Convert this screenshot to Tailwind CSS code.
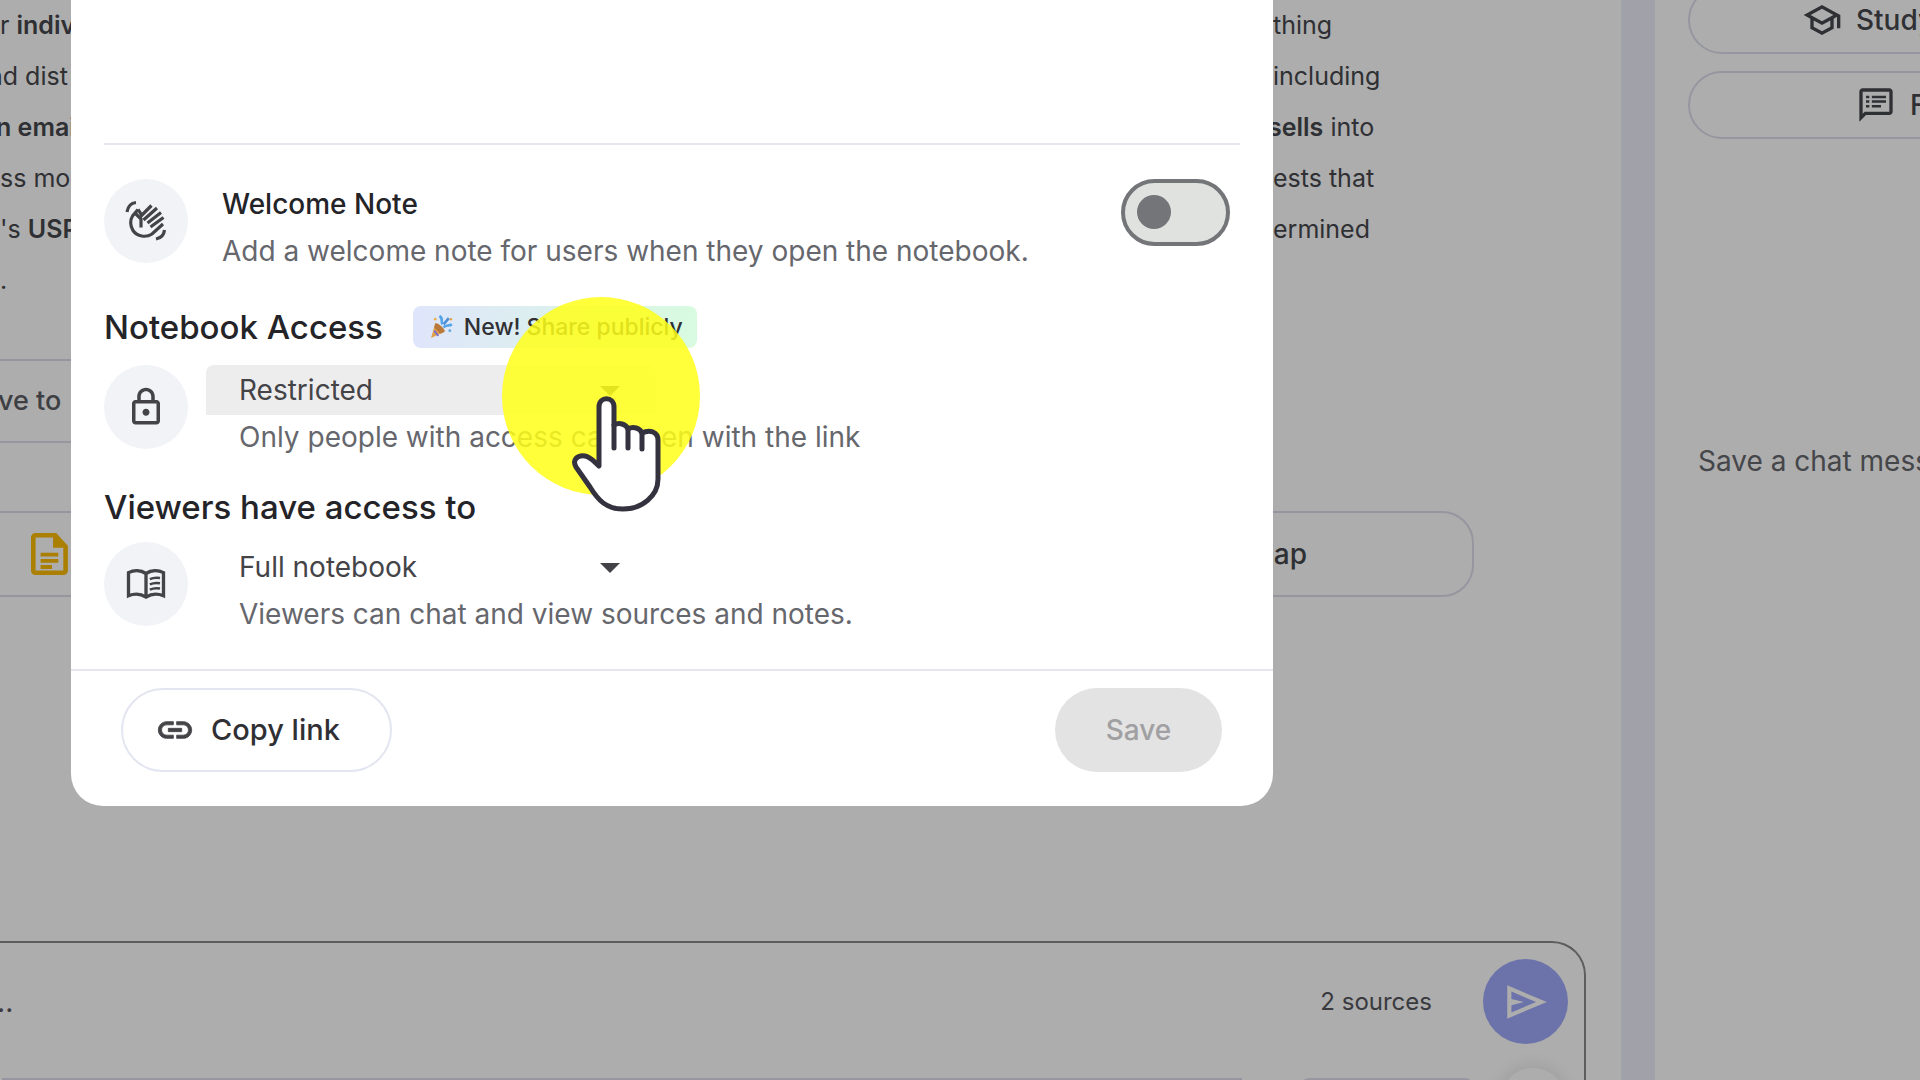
<!DOCTYPE html>
<html lang="en">
<head>
  <meta charset="UTF-8">
  <meta name="viewport" content="width=device-width, initial-scale=1.0">
  <title>Share notebook</title>
  <script src="https://cdn.jsdelivr.net/npm/@tailwindcss/browser@4"></script>
</head>
<body class="bg-[#edeffa] text-[#46474d] h-screen overflow-hidden relative [font-family:Inter,sans-serif]">

  <!-- Page behind the dialog -->
  <div class="flex h-full gap-[34px]">
    <main class="flex-1 min-w-0 bg-white flex flex-col overflow-hidden">
      <div class="text-[25px] leading-[51px] whitespace-nowrap">
        <p class="flex"><span class="w-[1273px] shrink-0">r <b class="font-semibold">indiv</b></span><span>thing</span></p>
        <p class="flex"><span class="w-[1273px] shrink-0"><span class="-ml-3">nd dist</span></span><span>including</span></p>
        <p class="flex"><span class="w-[1268px] shrink-0 font-semibold"><span class="-ml-1">n emai</span></span><span><b class="font-semibold">sells</b> into</span></p>
        <p class="flex"><span class="w-[1273px] shrink-0">ss mo</span><span>ests that</span></p>
        <p class="flex"><span class="w-[1273px] shrink-0">'s <b class="font-semibold">USP</b></span><span>ermined</span></p>
        <p>.</p>
      </div>

      <button class="mt-[53px] -ml-8 w-[300px] h-[84px] shrink-0 border-2 border-[#dcdeea] rounded-[32px] pl-7 text-left text-[27px] font-medium text-[#5c5d63]">ve to</button>

      <div class="mt-[68px] -ml-8 mr-[147px] flex gap-6">
        <button class="w-[600px] h-[86px] shrink-0 border-2 border-[#dcdeea] rounded-[32px] pl-14" aria-label="Add note">
          <svg class="w-[50px] h-[50px]" viewBox="0 0 24 24">
            <path d="M4.500 3h9.500l5 5.500v11.500a1 1 0 0 1-1 1h-13.500a1 1 0 0 1-1-1v-16a1 1 0 0 1 1-1z" fill="none" stroke="#fbbc04" stroke-width="2.200"/>
            <path d="M13 2.500v6.500h6.500z" fill="#fbbc04"/>
            <path d="M7 12.300h8.500M7 15.300h8.500M7 18.200h5.500" stroke="#fbbc04" stroke-width="1.900"/>
          </svg>
        </button>
        <button class="flex-1 h-[86px] border-2 border-[#dcdeea] rounded-[32px] pr-[165px] text-right text-[28px] font-medium">Mind map</button>
      </div>

      <div class="mt-auto mr-[35px] -ml-8 h-[139px] shrink-0 border-2 border-b-0 border-[#8a8a8e] rounded-t-[34px] flex flex-col overflow-hidden">
        <div class="flex items-center pl-[19px] pr-4 pt-4 shrink-0">
          <input type="text" placeholder="..." aria-label="Message" class="flex-1 min-w-0 text-[28px] placeholder:text-[#55565c]">
          <span class="text-2xl mr-[51px] text-[#55565c]">2 sources</span>
          <button class="w-[85px] h-[85px] rounded-full bg-[#9faafb] flex items-center justify-center" aria-label="Send">
            <svg class="w-[50px] h-[50px]" viewBox="0 0 24 24" fill="#fff"><path d="M3 20V4l19 8-19 8zm2-3 11.850-5L5 7v3.500l6 1.500-6 1.500V17z"/></svg>
          </button>
        </div>
        <div class="flex pl-8 pr-[18px] mt-6 items-start gap-6">
          <button class="w-[1240px] h-16 mt-[10px] mr-8 shrink-0 border-t-2 border-[#dcdeea]" aria-label="Suggested question"></button>
          <button class="flex-1 h-16 mt-[10px] border-t-2 border-[#dcdeea] rounded-xl" aria-label="Suggested question"></button>
          <button class="w-[66px] h-[66px] rounded-full bg-white shadow-[0_0_14px_4px_rgba(0,0,0,0.08)]" aria-label="Next"></button>
        </div>
      </div>
    </main>

    <aside class="w-[265px] bg-white overflow-hidden whitespace-nowrap text-[28px]">
      <div class="pl-[33px] flex flex-col gap-[17px] font-medium">
        <button class="-mt-[14px] w-[420px] h-[68px] border-2 border-[#dcdeea] rounded-full flex items-center gap-[14px] pl-28">
          <svg class="w-10 h-10" viewBox="0 0 24 24" fill="currentColor"><path d="M12 3 1 9l4 2.180v6L12 21l7-3.820v-6l2-1.090V17h2V9L12 3zm6.820 6L12 12.720 5.180 9 12 5.280 18.820 9zM17 15.990l-5 2.730-5-2.730v-3.720L12 15l5-2.730v3.720z"/></svg>
          Study guide
        </button>
        <button class="w-[420px] h-[68px] border-2 border-[#dcdeea] rounded-full flex items-center gap-[14px] pl-[166px]">
          <svg class="w-10 h-10" viewBox="0 0 24 24" fill="currentColor"><path d="M20 2H4c-1.100 0-2 .9-2 2v18l4-4h14c1.100 0 2-.9 2-2V4c0-1.100-.9-2-2-2zm0 14H5.200L4 17.200V4h16v12zM6 12h2v1.500H6zM6 9.200h2v1.500H6zM6 6.400h2v1.500H6zM9.500 12h5.500v1.500H9.500zM9.500 9.200h8.500v1.500H9.500zM9.500 6.400h8.500v1.500H9.500z"/></svg>
          FAQ
        </button>
      </div>
      <p class="mt-[301px] pl-[43px] leading-[42px] text-[#66676d]">Save a chat message</p>
    </aside>
  </div>

  <div class="absolute inset-0 bg-black/32"></div>

  <!-- Share dialog -->
  <div role="dialog" aria-label="Share notebook" class="absolute top-0 left-[71px] w-[1202px] bg-white rounded-b-[32px] text-[28px]">
    <div class="px-[33px]">
      <div class="h-[143px]"></div>
      <hr class="border-t-2 border-[#e6e6f0]">

      <div class="flex items-start mt-[34px]">
        <span class="w-[84px] h-[84px] rounded-full bg-[#f1f3f7] flex items-center justify-center">
          <svg class="w-[42px] h-[42px]" viewBox="0 0 42 42" fill="none" stroke="#444448" stroke-width="3.200">
            <path d="M2 12C3 6 6 3 11 2.500M31 39c5-1 8-4 8.500-9"/>
            <path d="M13 9.500 7.500 16C5 20 5 26 8 30.500c4 6 13 7.500 19 3.500L38 24"/>
            <path d="M10.500 13.500 16 19v8.500"/>
            <path d="M13 9.500c1.500 2 3 4 3.500 6L26.500 5.500M18.500 20 32 8M22.500 23 36 12.500M25.500 27 38.500 17.500"/>
          </svg>
        </span>
        <div class="flex-1 ml-[34px] pt-[2px] leading-[47px]">
          <h3 class="font-medium text-[#242428]">Welcome Note</h3>
          <p id="welcome-desc" class="text-[#66676d]">Add a welcome note for users when they open the notebook.</p>
        </div>
        <label class="relative block mr-[10px]">
          <input type="checkbox" aria-label="Welcome Note" aria-describedby="welcome-desc" class="block appearance-none w-[109px] h-[67px] rounded-full border-4 border-[#747578] bg-[#e0e2e0]">
          <span class="absolute left-4 top-4 w-[34px] h-[34px] rounded-full bg-[#747578]"></span>
        </label>
      </div>

      <div class="flex items-center mt-[31px] gap-[30px]">
        <h2 class="text-[33px] leading-[42px] font-medium text-[#242428]">Notebook Access</h2>
        <span class="h-[42px] w-[284px] rounded-lg bg-linear-to-r from-[#dfe5fb] to-[#d8fbdf] flex items-center pl-4 gap-[10px] text-[23px] font-medium whitespace-nowrap text-[#303034]">
          <svg class="w-[25px] h-[25px]" viewBox="0 0 24 24">
            <path d="M6 8 2 22l13-6z" fill="#e0a04a"/>
            <path d="M6 8 5 12l6 6 4-2c1-2-6-9-9-8z" fill="#b9793a"/>
            <path d="M10 1c4 2 1 5 3 8M14 12c2-3 5-1 8-3" fill="none" stroke="#55a5e8" stroke-width="2.600"/>
            <path d="m14 9 5-6" stroke="#4f8fd6" stroke-width="2.600"/>
            <circle cx="6" cy="4" r="1.300" fill="#e8b24a"/><circle cx="21" cy="4" r="1.200" fill="#e0a04a"/><circle cx="20" cy="15" r="1.400" fill="#68a8e0"/>
            <path d="m5 15 4 5" stroke="#7a6fd0" stroke-width="1.800"/>
          </svg>
          New! Share publicly
        </span>
      </div>

      <div class="flex items-start mt-[17px]">
        <span class="w-[84px] h-[84px] rounded-full bg-[#f1f3f7] flex items-center justify-center">
          <svg class="w-[42px] h-[42px]" viewBox="0 0 24 24" fill="#444448"><path d="M18 8h-1V6c0-2.760-2.240-5-5-5S7 3.240 7 6v2H6c-1.100 0-2 .9-2 2v10c0 1.100.9 2 2 2h12c1.100 0 2-.9 2-2V10c0-1.100-.9-2-2-2zM9 6c0-1.660 1.340-3 3-3s3 1.340 3 3v2H9V6zm9 14H6V10h12v10zm-6-3c1.100 0 2-.9 2-2s-.9-2-2-2-2 .9-2 2 .9 2 2 2z"/></svg>
        </span>
        <div class="ml-[18px]">
          <div class="relative w-[450px]">
            <select aria-label="Notebook Access" class="appearance-none block w-full h-[50px] bg-[#ededed] rounded-t-lg pl-[33px] text-[#444448]">
              <option>Restricted</option>
            </select>
            <svg class="absolute right-9 top-[21px] w-5 h-[10px] pointer-events-none" viewBox="0 0 20 10" fill="#444448"><path d="M0 0h20L10 10z"/></svg>
          </div>
          <p class="pl-[33px] leading-[44px] text-[#66676d]">Only people with access can open with the link</p>
        </div>
      </div>

      <h2 class="mt-[27px] text-[33px] leading-[42px] font-medium text-[#242428]">Viewers have access to</h2>

      <div class="flex items-start mt-[14px]">
        <span class="w-[84px] h-[84px] rounded-full bg-[#f1f3f7] flex items-center justify-center">
          <svg class="w-[42px] h-[42px]" viewBox="0 0 24 24" fill="none" stroke="#444448" stroke-width="1.900">
            <path d="M2 5.500C5 4 9 4 12 6c3-2 7-2 10-.5v13.200c-3-1.200-7-1.200-10 .8-3-2-7-2-10-.8zM12 6v13.500"/>
            <path d="M14.200 9.200c1.800-.8 3.800-1 5.800-.6M14.200 12.200c1.800-.8 3.800-1 5.800-.6M14.200 15.200c1.800-.8 3.800-1 5.800-.6" stroke-width="1.400"/>
          </svg>
        </span>
        <div class="ml-[18px]">
          <div class="relative w-[450px]">
            <select aria-label="Viewers have access to" class="appearance-none block w-full h-[50px] pl-[33px] text-[#444448]">
              <option>Full notebook</option>
            </select>
            <svg class="absolute right-9 top-[21px] w-5 h-[10px] pointer-events-none" viewBox="0 0 20 10" fill="#444448"><path d="M0 0h20L10 10z"/></svg>
          </div>
          <p class="pl-[33px] leading-[44px] text-[#66676d]">Viewers can chat and view sources and notes.</p>
        </div>
      </div>
    </div>

    <div class="mt-[33px] border-t-2 border-[#e6e6f0] flex justify-between pt-[17px] pb-[34px] pl-[50px] pr-[51px] font-medium">
      <button class="h-[84px] w-[271px] border-2 border-[#e3e5f1] rounded-full flex items-center pl-8 gap-4 text-[29px] text-[#303034]">
        <svg class="w-10 h-10" viewBox="0 0 24 24" fill="#444448" stroke="#444448" stroke-width=".5"><path d="M3.900 12c0-1.710 1.390-3.100 3.100-3.100h4V7H7c-2.760 0-5 2.240-5 5s2.240 5 5 5h4v-1.900H7c-1.710 0-3.100-1.390-3.100-3.100zM8 13h8v-2H8v2zm9-6h-4v1.900h4c1.710 0 3.100 1.390 3.100 3.100s-1.390 3.100-3.100 3.100h-4V17h4c2.760 0 5-2.240 5-5s-2.240-5-5-5z"/></svg>
        Copy link
      </button>
      <button disabled class="h-[84px] w-[167px] rounded-full bg-[#e3e3e3] text-[#a0a0a2]">Save</button>
    </div>
  </div>

  <!-- Click highlight and pointer -->
  <div class="absolute left-[502px] top-[297px] w-[198px] h-[198px] rounded-full bg-[#ffff18]/85"></div>
  <svg class="absolute left-[540px] top-[360px] w-[160px] h-[160px]" viewBox="0 0 160 160" fill="#fff" stroke="#34323f" stroke-width="5" stroke-linejoin="round" stroke-linecap="round">
    <path d="M59 106V47c0-11 15-11 15 0v18c5-3 12-1 14 4 5-3 12-1 14 4 8-4 16-1 16 7v39c0 17-16 30-35 30-17 0-25-9-33-22L36 107c-4-7 1-12 9-11 6 1 9 6 14 10z"/>
    <path d="M74 65v23M88 69v19M102 73v16" fill="none"/>
  </svg>

</body>
</html>
